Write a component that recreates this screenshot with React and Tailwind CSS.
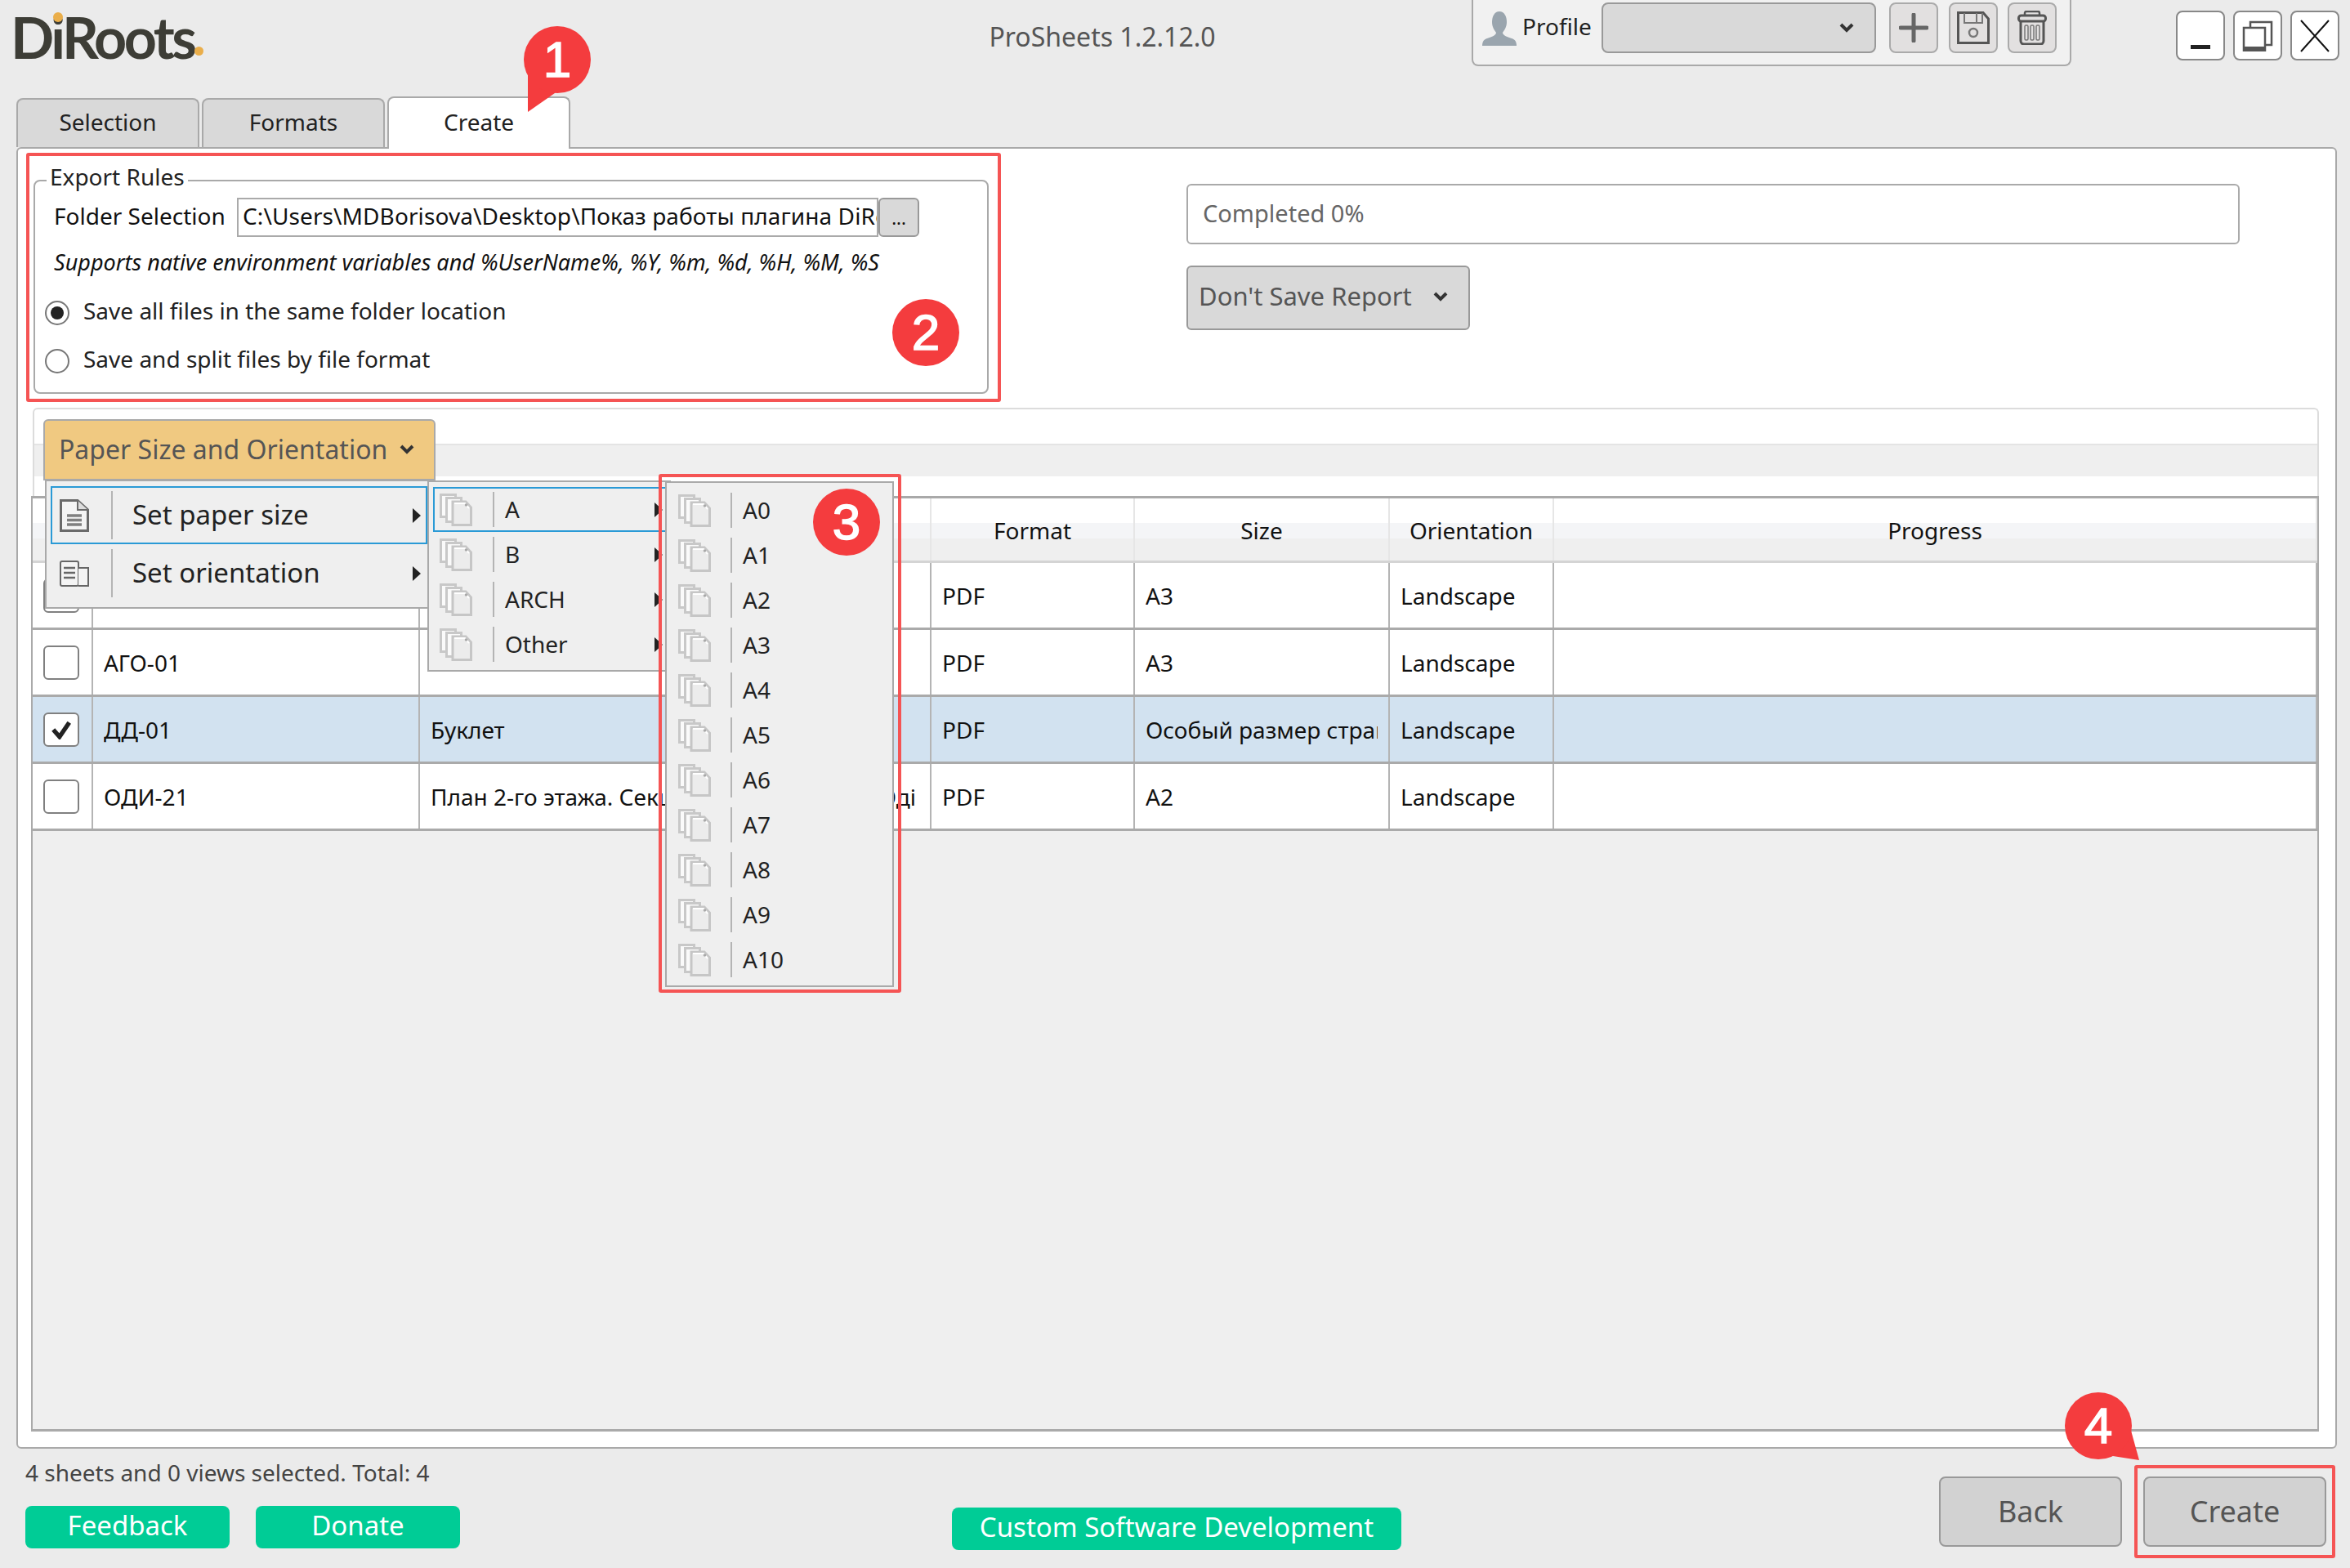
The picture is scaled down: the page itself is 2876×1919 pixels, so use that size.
import { useState } from "react";

const UI_FONT = "font-['Noto_Sans',sans-serif]";

const COLUMNS = ["w-[74px]", "w-[400px]", "w-[626px]", "w-[249px]", "w-[312px]", "w-[201px]", "w-[934px]"];

const ROWS = [
  { checked: false, number: "", name: "", format: "PDF", size: "A3", orientation: "Landscape" },
  { checked: false, number: "АГО-01", name: "ТИТУЛ", format: "PDF", size: "A3", orientation: "Landscape" },
  { checked: true, number: "ДД-01", name: "Буклет", format: "PDF", size: "Особый размер страницы", orientation: "Landscape", selected: true },
  { checked: false, number: "ОДИ-21", name: "План 2-го этажа. Секция 1. Планировка. Оді", format: "PDF", size: "A2", orientation: "Landscape" },
];

const SIZE_GROUPS = ["A", "B", "ARCH", "Other"];
const A_SIZES = ["A0", "A1", "A2", "A3", "A4", "A5", "A6", "A7", "A8", "A9", "A10"];

function Chevron({ className = "" }) {
  return (
    <svg viewBox="0 0 20 14" className={className} fill="none">
      <path d="M3 3l7 7 7-7" stroke="currentColor" strokeWidth="4" />
    </svg>
  );
}

function Arrow() {
  return (
    <svg viewBox="0 0 10 18" className="w-[10px] h-[18px] shrink-0">
      <path d="M0 0l10 9-10 9z" fill="#222" />
    </svg>
  );
}

function PagesIcon() {
  return (
    <svg viewBox="0 0 40 40" className="w-[40px] h-[40px] shrink-0">
      <rect x="1.5" y="1.5" width="18" height="27" fill="#fafafa" stroke="#c8c8c8" strokeWidth="3" />
      <rect x="8.5" y="5.5" width="18" height="29" fill="#fafafa" stroke="#c8c8c8" strokeWidth="3" />
      <path d="M16 10H32L38.5 17V38.5H16Z" fill="#ececec" stroke="#c6c6c6" strokeWidth="3" />
      <path d="M18 12H31L36 18" fill="none" stroke="#fff" strokeWidth="2" />
      <circle cx="32.5" cy="14" r="1.8" fill="#aaa" />
    </svg>
  );
}

function DocIcon() {
  return (
    <svg viewBox="0 0 36 40" className="w-[36px] h-[40px]" fill="none" stroke="#6a6a6a">
      <path d="M1.5 1.5H22L34.5 13V38.5H1.5Z" fill="#f4f4f4" strokeWidth="3" />
      <path d="M22 1.5V13H34.5" strokeWidth="2" fill="#ddd" />
      <path d="M9 20h18M9 25.5h18M9 31h18" strokeWidth="3.5" stroke="#808080" />
    </svg>
  );
}

function OrientationIcon() {
  return (
    <svg viewBox="0 0 36 32" className="w-[36px] h-[32px]" fill="none" stroke="#666">
      <rect x="1" y="1" width="22" height="30" rx="2" fill="#f4f4f4" strokeWidth="2" />
      <path d="M23 9h12v22H23" fill="#f4f4f4" strokeWidth="2" />
      <path d="M5 9h14M5 15h14M5 21h14" strokeWidth="2.5" />
    </svg>
  );
}

function MenuItem({ icon, label, active, height, sepClass, textClass, arrow }) {
  return (
    <div
      className={`flex items-center border-2 ${active ? "border-[#2a9ad6]" : "border-transparent"} ${height}`}
    >
      <div className={`flex items-center self-stretch shrink-0 border-r-2 border-[#b4b4b4] my-[4px] ${sepClass}`}>
        {icon}
      </div>
      <span className={`flex-1 text-[#222] pb-[1px] ${textClass}`}>{label}</span>
      {arrow && (
        <span className="mr-[6px]">
          <Arrow />
        </span>
      )}
    </div>
  );
}

// numbered red marker, the tail points at what it annotates
function Callout({ number, tail, className }) {
  return (
    <div className={`absolute w-[110px] h-[120px] ${className}`}>
      <svg viewBox="0 0 110 120" className="absolute inset-0 w-full h-full">
        {tail && <path d={tail} fill="#f43c3e" />}
        <circle cx="55" cy="55" r="41" fill="#f43c3e" />
      </svg>
      <span className="absolute left-[14px] top-[14px] w-[82px] h-[82px] flex items-center justify-center text-white text-[62px] leading-none font-['Liberation_Sans',sans-serif] [-webkit-text-stroke:1.5px_white]">
        {number}
      </span>
    </div>
  );
}

function Checkbox({ checked }) {
  return (
    <div className="w-[44px] h-[42px] bg-white border-2 border-[#808080] rounded-[6px] flex items-center justify-center">
      {checked && (
        <svg viewBox="0 0 24 22" className="w-[26px] h-[24px]" fill="none">
          <path d="M3 11l7 8L21 3" stroke="#222" strokeWidth="5" />
        </svg>
      )}
    </div>
  );
}

function Cell({ width, children, className = "" }) {
  return (
    <div className={`${width} shrink-0 h-full flex items-center px-[13px] border-r-2 border-[#b4b4b4] ${className}`}>
      <span className="block w-full overflow-hidden whitespace-nowrap">{children}</span>
    </div>
  );
}

function HeaderCell({ width, children }) {
  return (
    <div className={`${width} shrink-0 h-full flex items-center justify-center border-r-2 border-[#e6e6e6] pt-[2px] text-[#111]`}>
      {children}
    </div>
  );
}

function Radio({ checked }) {
  return (
    <div className="w-[30px] h-[30px] rounded-full border-2 border-[#777] bg-white flex items-center justify-center">
      {checked && <div className="w-[16px] h-[16px] rounded-full bg-[#222]" />}
    </div>
  );
}

function TitleBar() {
  return (
    <div className="h-[118px] flex shrink-0 items-start">
      <div className="relative ml-[13px] mt-[10px] w-[235px] h-[70px] text-[#3d3d36] font-['Lato',sans-serif] font-bold text-[70px] leading-[70px] tracking-[-3.5px] whitespace-nowrap">
        DiRoots
        <span className="absolute left-[52px] top-[5px] w-[12px] h-[12px] rounded-full bg-[#eaae4a]" />
        <span className="absolute left-[225px] top-[47px] w-[11px] h-[11px] rounded-full bg-[#eaae4a]" />
      </div>
      <div className="ml-[961px] mt-[24px] w-[280px] shrink-0 text-[32px] leading-[42px] text-[#555] text-center whitespace-nowrap">
        ProSheets 1.2.12.0
      </div>
      <div className="ml-[312px] w-[734px] h-[81px] shrink-0 flex items-start pt-[3px] pl-[11px] bg-[#f1f1f1] border-2 border-t-0 border-[#a9a9a9] rounded-b-lg">
        <svg viewBox="0 0 42 42" className="w-[42px] h-[42px] mt-[11px] shrink-0">
          <path d="M21 0c6 0 9 6 9 13 0 6-3 10-5 13 0 3 5 5 11 7 4 1 6 4 6 9H0c0-5 2-8 6-9 6-2 11-4 11-7-2-3-5-7-5-13C12 6 15 0 21 0z" fill="#9aa5ae" />
        </svg>
        <span className="ml-[7px] w-[97px] text-[28px] leading-[58px] text-[#222]">Profile</span>
        <div className="w-[336px] h-[62px] bg-[#d9d9d9] border-2 border-[#999] rounded-lg flex items-center justify-end pr-[24px] text-[#333]">
          <Chevron className="w-[20px] h-[14px]" />
        </div>
        <div className="ml-[16px] w-[60px] h-[62px] bg-[#e2e0e0] border-2 border-[#aaa] rounded-lg flex items-center justify-center">
          <svg viewBox="0 0 36 36" className="w-[36px] h-[36px]">
            <path d="M2 18h32M18 2v32" stroke="#666" strokeWidth="5" strokeLinecap="round" />
          </svg>
        </div>
        <div className="ml-[13px] w-[60px] h-[62px] bg-[#e2e0e0] border-2 border-[#aaa] rounded-lg flex items-center justify-center">
          <svg viewBox="0 0 40 40" className="w-[40px] h-[40px]" fill="none" stroke="#555">
            <path d="M1.5 1.5H32L38.5 9V38.5H1.5Z" strokeWidth="3" />
            <path d="M9 2V14H31V2M24 2V13" strokeWidth="2" stroke="#777" />
            <circle cx="20" cy="26" r="5" strokeWidth="2.5" stroke="#777" />
          </svg>
        </div>
        <div className="ml-[12px] w-[60px] h-[62px] bg-[#e2e0e0] border-2 border-[#aaa] rounded-lg flex items-center justify-center">
          <svg viewBox="0 0 36 42" className="w-[36px] h-[42px]" fill="none" stroke="#555">
            <path d="M9 6V3a2 2 0 012-2h14a2 2 0 012 2v3" strokeWidth="2.5" />
            <rect x="1.5" y="6" width="33" height="7" rx="3" strokeWidth="3" />
            <path d="M4 13v24a4 4 0 004 4h20a4 4 0 004-4V13" strokeWidth="3" />
            <rect x="9" y="18" width="4" height="18" rx="1.5" strokeWidth="1.5" stroke="#777" />
            <rect x="16" y="18" width="4" height="18" rx="1.5" strokeWidth="1.5" stroke="#777" />
            <rect x="23" y="18" width="4" height="18" rx="1.5" strokeWidth="1.5" stroke="#777" />
          </svg>
        </div>
      </div>
      <div className="ml-[128px] mt-[13px] flex gap-[10px] shrink-0">
        <div className="w-[60px] h-[61px] bg-white border-2 border-[#888] rounded-lg flex items-end justify-center pb-[12px]">
          <div className="w-[24px] h-[5px] bg-[#222]" />
        </div>
        <div className="w-[60px] h-[61px] bg-white border-2 border-[#888] rounded-lg flex items-center justify-center">
          <svg viewBox="0 0 38 38" className="w-[38px] h-[38px]" fill="none" stroke="#555">
            <path d="M10 8V2h26v28h-8" strokeWidth="2.5" />
            <rect x="2" y="9" width="26" height="28" strokeWidth="2.5" />
            <path d="M2 34h26" strokeWidth="4" />
          </svg>
        </div>
        <div className="w-[60px] h-[61px] bg-white border-2 border-[#888] rounded-lg flex items-center justify-center">
          <svg viewBox="0 0 38 40" className="w-[38px] h-[40px]">
            <path d="M2 1l34 38M36 1L2 39" stroke="#111" strokeWidth="2" />
          </svg>
        </div>
      </div>
    </div>
  );
}

function ExportRules() {
  return (
    <div className="relative mt-[38px] ml-[19px] w-[1169px] h-[262px] shrink-0 border-2 border-[#a9a9a9] rounded-lg pt-[20px] pl-[23px]">
      <span className="absolute left-[14px] -top-[25px] px-[4px] bg-white text-[28px] leading-[38px] text-[#222]">
        Export Rules
      </span>
      <div className="flex items-center h-[48px] text-[#111]">
        <span className="w-[224px] shrink-0 text-[28px] pb-[5px] whitespace-nowrap">Folder Selection</span>
        <div className="w-[785px] h-[48px] border-2 border-[#aaa] bg-white pl-[5px] pb-[5px] flex items-center overflow-hidden text-[28px] tracking-[0.1px] whitespace-nowrap shrink-0">
          C:\Users\MDBorisova\Desktop\Показ работы плагина DiRoots
        </div>
        <div className="w-[50px] h-[48px] bg-[#d9d9d9] border-2 border-[#999] rounded-md flex items-center justify-center text-[22px] shrink-0">
          ...
        </div>
      </div>
      <div className="h-[50px] mt-[6px] flex items-center italic text-[27px] text-[#111] whitespace-nowrap">
        Supports native environment variables and %UserName%, %Y, %m, %d, %H, %M, %S
      </div>
      <div className="flex flex-col -ml-[11px] mt-[7px]">
        <div className="h-[59px] flex items-center gap-[17px] text-[28px] text-[#222]">
          <Radio checked />
          <span className="pb-[5px]">Save all files in the same folder location</span>
        </div>
        <div className="h-[59px] flex items-center gap-[17px] text-[28px] text-[#222]">
          <Radio />
          <span className="pb-[5px]">Save and split files by file format</span>
        </div>
      </div>
    </div>
  );
}

function SheetsGrid() {
  return (
    <div className="ml-[16px] w-[2800px] h-[1145px] bg-[#efefef] border-x-2 border-b-[3px] border-[#aaa] shrink-0 text-[28px] text-[#111] border-t-[3px] border-t-[#a9a9a9]">
      <div className="flex h-[79px] border-b-[3px] border-[#d4d4d4] bg-[linear-gradient(#fff_0,#fff_40%,#f4f5f7_40%,#f4f5f7_65%,#efefef_65%)]">
        <HeaderCell width={COLUMNS[0]} />
        <HeaderCell width={COLUMNS[1]} />
        <HeaderCell width={COLUMNS[2]} />
        <HeaderCell width={COLUMNS[3]}>Format</HeaderCell>
        <HeaderCell width={COLUMNS[4]}>Size</HeaderCell>
        <HeaderCell width={COLUMNS[5]}>Orientation</HeaderCell>
        <HeaderCell width={COLUMNS[6]}>Progress</HeaderCell>
      </div>
      {ROWS.map((row, index) => (
        <div
          key={index}
          className={`flex h-[82px] border-b-[3px] border-[#aaa] ${row.selected ? "bg-[#d2e2f0]" : "bg-white"}`}
        >
          <div className={`${COLUMNS[0]} shrink-0 h-full flex items-center pl-[13px] border-r-2 border-[#b4b4b4]`}>
            <Checkbox checked={row.checked} />
          </div>
          <Cell width={COLUMNS[1]}>{row.number}</Cell>
          <Cell width={COLUMNS[2]}>{row.name}</Cell>
          <Cell width={COLUMNS[3]}>{row.format}</Cell>
          <Cell width={COLUMNS[4]}>{row.size}</Cell>
          <Cell width={COLUMNS[5]}>{row.orientation}</Cell>
          <Cell width={COLUMNS[6]} />
        </div>
      ))}
    </div>
  );
}

function PaperMenus() {
  return (
    <>
      <div className="absolute left-[55px] top-[587px] w-[470px] h-[158px] bg-[#efefef] border-2 border-[#a9a9a9] pt-[6px] pl-[5px] z-10">
        <MenuItem
          active
          icon={<DocIcon />}
          label="Set paper size"
          height="h-[71px]"
          sepClass="w-[74px] pl-[9px]"
          textClass="pl-[24px] text-[33px]"
          arrow
        />
        <MenuItem
          icon={<OrientationIcon />}
          label="Set orientation"
          height="h-[71px]"
          sepClass="w-[74px] pl-[9px]"
          textClass="pl-[24px] text-[33px]"
          arrow
        />
      </div>
      <div className="absolute left-[523px] top-[588px] w-[298px] h-[234px] bg-[#efefef] border-2 border-[#a9a9a9] pt-[6px] pl-[5px] z-10">
        {SIZE_GROUPS.map((group, index) => (
          <MenuItem
            key={group}
            active={index === 0}
            icon={<PagesIcon />}
            label={group}
            height="h-[55px]"
            sepClass="w-[73px] pl-[6px]"
            textClass="pl-[13px] text-[28px]"
            arrow
          />
        ))}
      </div>
      <div className="absolute left-[814px] top-[589px] w-[280px] h-[619px] bg-[#efefef] border-2 border-[#a9a9a9] pt-[6px] pl-[5px] z-20">
        {A_SIZES.map((size) => (
          <MenuItem
            key={size}
            icon={<PagesIcon />}
            label={size}
            height="h-[55px]"
            sepClass="w-[73px] pl-[7px]"
            textClass="pl-[13px] text-[28px]"
          />
        ))}
      </div>
    </>
  );
}

export default function App() {
  const [activeTab] = useState("Create");

  return (
    <div className={`relative w-[2876px] h-[1919px] overflow-hidden bg-[#ebebeb] flex flex-col ${UI_FONT}`}>
      <TitleBar />

      <div className="flex h-[62px] ml-[20px] shrink-0 items-end gap-[3px]">
        {["Selection", "Formats", "Create"].map((tab) => (
          <div
            key={tab}
            className={`w-[224px] flex items-center justify-center border-2 border-[#a9a9a9] rounded-t-lg text-[28px] text-[#222] pb-[5px] ${
              tab === activeTab
                ? "h-[64px] -mb-[2px] bg-white border-b-0 z-10"
                : "h-[60px] bg-[#d9d9d9] border-b-0"
            }`}
          >
            {tab}
          </div>
        ))}
      </div>

      <div className="ml-[20px] w-[2840px] h-[1593px] shrink-0 bg-white border-2 border-[#a9a9a9] rounded-md flex flex-col">
        <div className="h-[317px] flex shrink-0">
          <ExportRules />
          <div className="ml-[242px] mt-[43px]">
            <div className="w-[1289px] h-[74px] border-2 border-[#aaa] rounded-md flex items-center pl-[18px] pb-[3px] text-[29px] text-[#666]">
              Completed 0%
            </div>
            <div className="mt-[26px] w-[347px] h-[79px] bg-[#d9d9d9] border-2 border-[#999] rounded-md flex items-center justify-between pl-[13px] pr-[24px] pb-[4px] text-[31px] text-[#555] whitespace-nowrap">
              Don't Save Report
              <Chevron className="w-[20px] h-[14px] text-[#333]" />
            </div>
          </div>
        </div>

        <div className="relative ml-[18px] w-[2798px] h-[108px] shrink-0 border-2 border-b-0 border-[#dcdcdc] rounded-t-md">
          <div className="absolute inset-x-0 top-[42px] h-[40px] bg-[#efefef] border-t-2 border-[#e4e4e4]" />
          <div className="relative ml-[11px] mt-[12px] w-[480px] h-[75px] bg-[#f0c981] border-2 border-[#a9a9a9] rounded-t-md flex items-center pl-[17px] pb-[2px] gap-[14px] text-[32px] text-[#555] whitespace-nowrap">
            Paper Size and Orientation
            <Chevron className="w-[20px] h-[14px] text-[#333]" />
          </div>
        </div>

        <SheetsGrid />
      </div>

      <div className="flex items-start flex-1 pl-[31px]">
        <div className="w-[532px] shrink-0">
          <div className="mt-[9px] h-[40px] flex items-center text-[28px] text-[#444] whitespace-nowrap">
            4 sheets and 0 views selected. Total: 4
          </div>
          <div className="mt-[21px] flex gap-[32px]">
            <div className="w-[250px] h-[52px] bg-[#00cc96] rounded-lg flex items-center justify-center pb-[4px] text-[33px] text-white">Feedback</div>
            <div className="w-[250px] h-[52px] bg-[#00cc96] rounded-lg flex items-center justify-center pb-[4px] text-[33px] text-white">Donate</div>
          </div>
        </div>
        <div className="ml-[602px] mt-[72px] w-[550px] h-[52px] shrink-0 bg-[#00cc96] rounded-lg flex items-center justify-center pb-[4px] text-[33px] text-white whitespace-nowrap">
          Custom Software Development
        </div>
        <div className="ml-[658px] mt-[34px] w-[224px] h-[86px] shrink-0 bg-[#d2d2d2] border-2 border-[#999] rounded-lg flex items-center justify-center text-[36px] text-[#555]">
          Back
        </div>
        <div className="ml-[26px] mt-[34px] w-[224px] h-[86px] shrink-0 bg-[#d2d2d2] border-2 border-[#999] rounded-lg flex items-center justify-center text-[36px] text-[#555]">
          Create
        </div>
      </div>

      <PaperMenus />

      {/* annotation frames and markers over the app window */}
      <div className="absolute left-[32px] top-[187px] w-[1193px] h-[305px] border-[4px] border-[#f55454] rounded-[3px] z-30" />
      <div className="absolute left-[806px] top-[580px] w-[297px] h-[635px] border-[4px] border-[#f55454] rounded-[3px] z-30" />
      <div className="absolute left-[2612px] top-[1793px] w-[246px] h-[114px] border-[4px] border-[#f55454] rounded-[3px] z-30" />

      <Callout number="1" className="left-[627px] top-[18px] z-30" tail="M19 60V119L72 82z" />
      <Callout number="2" className="left-[1078px] top-[352px] z-30" />
      <Callout number="3" className="left-[981px] top-[584px] z-30" />
      <Callout number="4" className="left-[2513px] top-[1690px] z-30" tail="M92 50L105 97 60 90z" />
    </div>
  );
}
